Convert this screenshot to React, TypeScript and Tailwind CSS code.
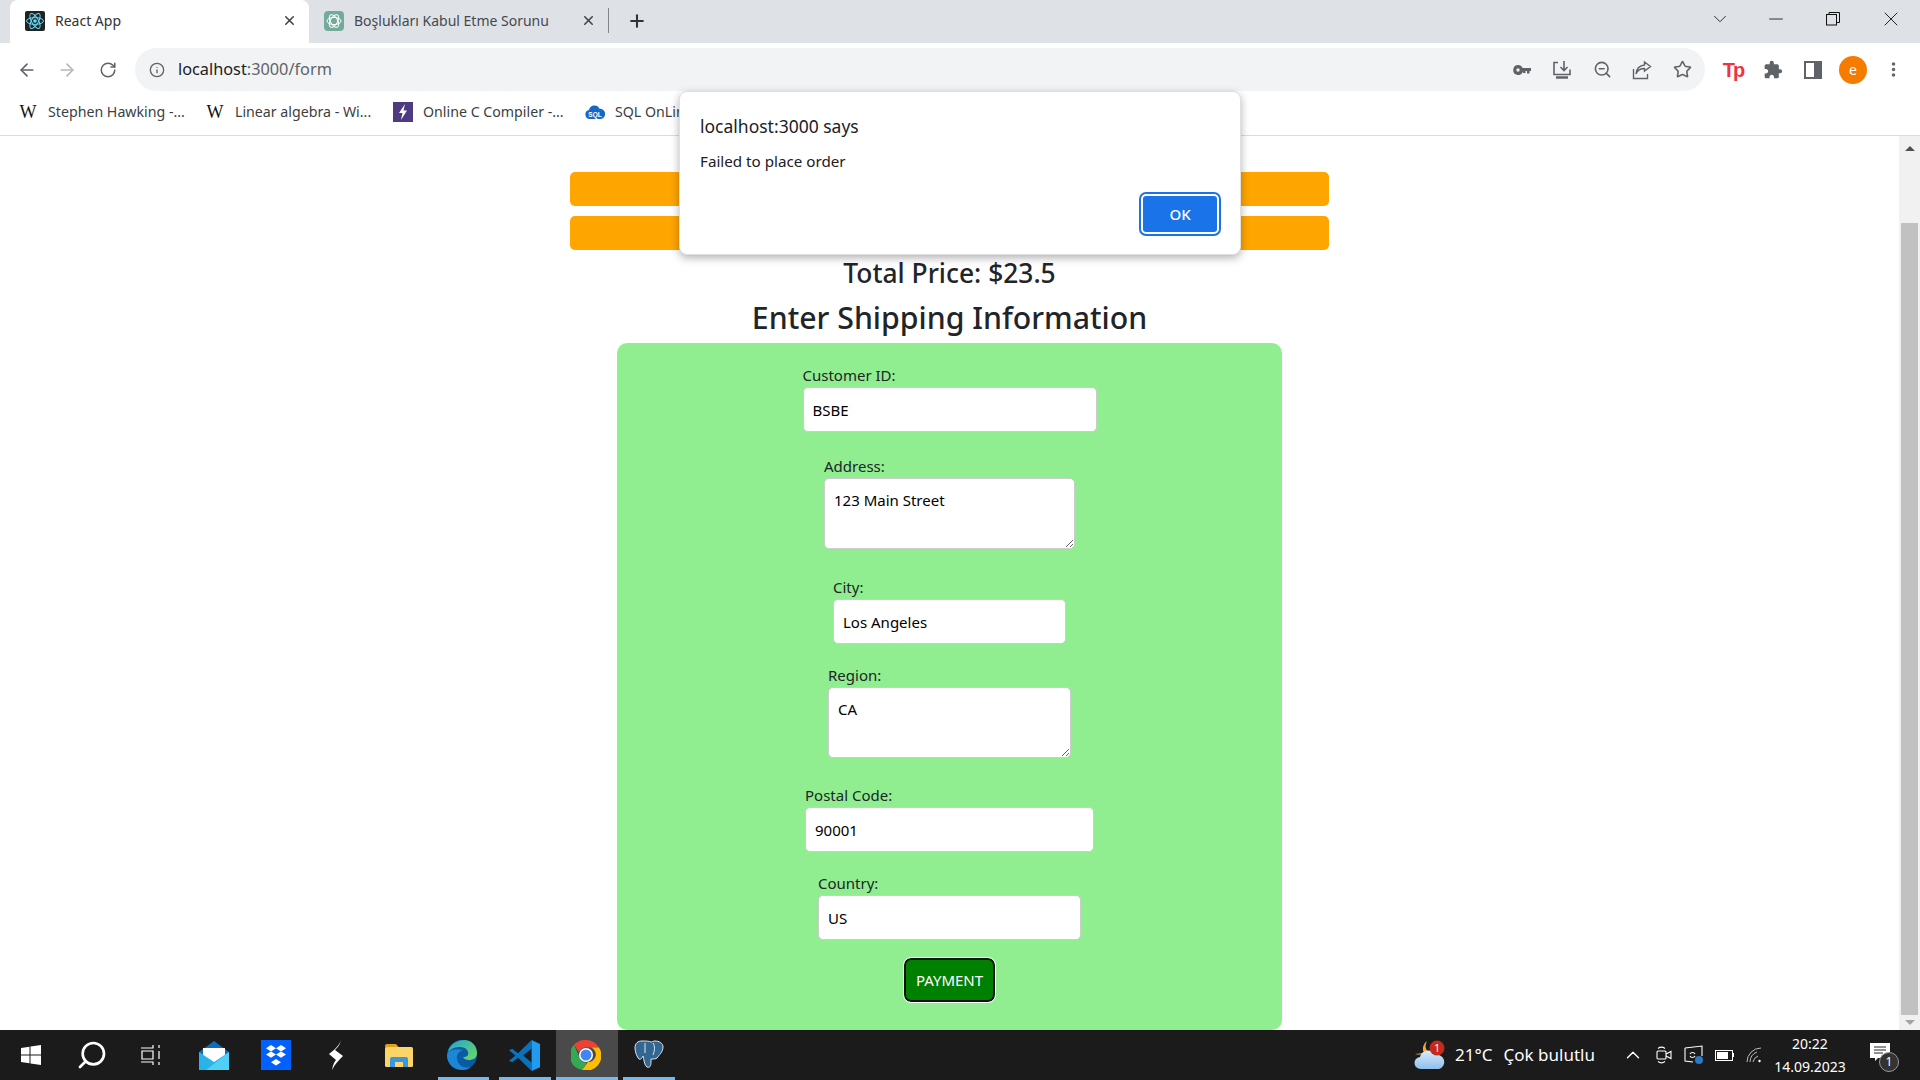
import { ArrowLeft, ArrowRight, ChevronDown, ChevronUp, Info, Minus, MoreVertical, Plus, RotateCw, Search, Star, X, ZoomOut } from "lucide-react";
import type { ReactNode } from "react";

const ReactFavicon = () => (
  <svg width="20" height="20" viewBox="0 0 20 20">
    <rect width="20" height="20" rx="2" fill="#222" />
    <g fill="none" stroke="#61dafb" strokeWidth="1">
      <ellipse cx="10" cy="10" rx="8.5" ry="3.4" />
      <ellipse cx="10" cy="10" rx="8.5" ry="3.4" transform="rotate(60 10 10)" />
      <ellipse cx="10" cy="10" rx="8.5" ry="3.4" transform="rotate(120 10 10)" />
    </g>
    <circle cx="10" cy="10" r="1.8" fill="#61dafb" />
  </svg>
);

const GptFavicon = () => (
  <svg width="20" height="20" viewBox="0 0 20 20">
    <rect width="20" height="20" rx="4" fill="#74aa9c" />
    <g fill="none" stroke="#fff" strokeWidth="1">
      <ellipse cx="10" cy="10" rx="7" ry="3.6" />
      <ellipse cx="10" cy="10" rx="7" ry="3.6" transform="rotate(60 10 10)" />
      <ellipse cx="10" cy="10" rx="7" ry="3.6" transform="rotate(120 10 10)" />
    </g>
  </svg>
);

const Wiki = () => <span className="w-[20px] shrink-0 text-center font-['Liberation_Serif',serif] text-[18px] leading-none text-[#111]">W</span>;

const BoltFavicon = () => (
  <svg width="20" height="20" viewBox="0 0 20 20" className="shrink-0">
    <rect width="20" height="20" fill="#4e3a80" />
    <path d="M12 2 6 11h3.5L8 18l6-9.500h-3.500z" fill="#fff" />
  </svg>
);

const SqlFavicon = () => (
  <svg width="20" height="20" viewBox="0 0 20 20" className="shrink-0">
    <path d="M5 17a4.500 4.500 0 0 1-1-8.900 5.500 5.500 0 0 1 10.500-1.300A5 5 0 0 1 15.500 17z" fill="#1667c7" />
    <text x="10" y="14.500" textAnchor="middle" fill="#fff" fontSize="6.500" fontWeight="700" fontFamily="Liberation Sans, sans-serif">SQL</text>
  </svg>
);

const Restore = () => (
  <svg width="14" height="14" viewBox="0 0 14 14" fill="none" stroke="#111" strokeWidth="1">
    <rect x="0.500" y="2.500" width="10" height="10.500" />
    <path d="M3 2.500V.5h10.500v10H11" />
  </svg>
);

const KeyIcon = () => (
  <svg width="18" height="10" viewBox="0 0 18 10" fill="#5f6368">
    <path d="M5 0a5 5 0 0 1 4.600 3H18v3h-1.500v2.500H14V6h-1.500v2H10V6.500A5 5 0 1 1 5 0zm0 3.300a1.700 1.700 0 1 0 0 3.400 1.700 1.700 0 0 0 0-3.400z" fillRule="evenodd" />
  </svg>
);

const DownloadIcon = () => (
  <svg width="20" height="20" viewBox="0 0 20 20" fill="none" stroke="#5f6368" strokeWidth="1.600">
    <path d="M6 2.500H2v12h16v-5M12 1v9M8.500 7l3.500 3.500L15.500 7" />
    <path d="M4 17.500h12" strokeWidth="2.500" />
  </svg>
);

const ShareIcon = () => (
  <svg width="20" height="20" viewBox="0 0 20 20" fill="none" stroke="#5f6368" strokeWidth="1.400">
    <path d="M1.500 9v9.500h14V14M12.500 2l6 4.500-6 4.500V8.500C8 8.500 5.500 10.500 4 14c.5-5 3.500-8.500 8.500-9z" />
  </svg>
);

const PuzzleIcon = () => (
  <svg width="20" height="20" viewBox="0 0 24 24" fill="#5f6368">
    <path d="M20.500 11H19V7c0-1.100-.9-2-2-2h-4V3.500a2.500 2.500 0 0 0-5 0V5H4c-1.100 0-1.990.9-1.990 2v3.800H3.500c1.490 0 2.700 1.210 2.700 2.700s-1.210 2.700-2.700 2.700H2V20c0 1.100.9 2 2 2h3.800v-1.500c0-1.490 1.210-2.700 2.700-2.700s2.700 1.210 2.700 2.700V22H17c1.100 0 2-.9 2-2v-4h1.500a2.500 2.500 0 0 0 0-5z" />
  </svg>
);

const TpLogo = () => (
  <span className="font-['Liberation_Sans',sans-serif] text-[20px] font-bold leading-none tracking-[-2px] text-[#f2323f]">Tp</span>
);

const PanelIcon = () => (
  <span className="block h-[18px] w-[18px] border-[2px] border-r-[8px] border-[#5f6368] bg-white" />
);

const WinLogo = () => (
  <svg width="20" height="20" viewBox="0 0 20 20" fill="#fff">
    <path d="M0 3l8.500-1.200V9.500H0zM9.500 1.600 20 0v9.500H9.500zM0 10.500h8.500v7.700L0 17zM9.500 10.500H20V20L9.500 18.400z" />
  </svg>
);

const TaskView = () => (
  <svg width="20" height="20" viewBox="0 0 20 20" fill="none" stroke="#fff" strokeWidth="1.200">
    <path d="M0 3h12V0M0 17h12v3M1 6h11v8H1zM18 0v3M18 6v8M18 17v3" />
  </svg>
);

const MailIcon = () => (
  <svg width="30" height="29" viewBox="0 0 30 29">
    <path d="M15 0 30 11v18H0V11z" fill="#0f6cbd" />
    <path d="M4 7h22v9l-11 7-11-7z" fill="#fff" />
    <path d="M0 11l15 10 15-10v18H0z" fill="#28b4ea" />
    <path d="M30 11v18H7z" fill="#50d0f5" />
  </svg>
);

const DropboxIcon = () => (
  <svg width="30" height="30" viewBox="0 0 30 30">
    <rect width="30" height="30" fill="#0061ff" />
    <path d="M10 5l5 3.200-5 3.200-5-3.200zM20 5l5 3.200-5 3.200-5-3.200zM10 11.400l5 3.200-5 3.200-5-3.200zM20 11.400l5 3.200-5 3.200-5-3.200zM15 19l5 3.200-5 3.200-5-3.200z" fill="#fff" />
  </svg>
);

const BoltMark = () => (
  <svg width="16" height="30" viewBox="0 0 16 30">
    <path d="M13 0C12 5 9 8 7 10l8 6c-4 4-8 8-11 14 1-5 2-8 4-10l-7-6C6 10 11 6 13 0z" fill="#fff" />
  </svg>
);

const FolderIcon = () => (
  <svg width="28" height="23" viewBox="0 0 28 23">
    <path d="M0 2a2 2 0 0 1 2-2h9l3 3.500H0z" fill="#e0a11a" />
    <rect y="3" width="28" height="20" rx="1.500" fill="#fbd568" />
    <path d="M5 23v-8a2 2 0 0 1 2-2h14a2 2 0 0 1 2 2v8h-5v-5h-8v5z" fill="#3a96dd" />
  </svg>
);

const EdgeIcon = () => (
  <svg width="30" height="30" viewBox="0 0 30 30">
    <defs>
      <linearGradient id="edgeTop" x1="0" y1="0" x2="1" y2="1">
        <stop offset="0" stopColor="#1fa5d8" />
        <stop offset="1" stopColor="#6fdb5c" />
      </linearGradient>
    </defs>
    <circle cx="15" cy="15" r="15" fill="#0c59a4" />
    <path d="M1 12C3 3 12 0 17 0c8 0 13 6 13 13 0 5-4 7-8 7-3 0-5-1-6-3 4 0 6-2 5-5-1-4-5-5-9-5-5 0-9 3-11 5z" fill="url(#edgeTop)" />
    <path d="M0 15c0 9 7 15 15 15 4 0 7-1 9-3-8 2-13-2-14-8-1-5 3-8 6-9-7-2-15 0-16 5z" fill="#1b87d6" />
  </svg>
);

const VsCodeIcon = () => (
  <svg width="31" height="31" viewBox="0 0 24 24">
    <path d="M17.500 0 7 10.200 2.500 6.700 0 8l5 4-5 4 2.500 1.300L7 13.800 17.500 24V17.500L11 12l6.500-5.500z" fill="#0a72bd" />
    <path d="M17.500 0 24 3v18l-6.500 3z" fill="#1f9cf0" />
  </svg>
);

const ChromeIcon = () => (
  <svg width="30" height="30" viewBox="0 0 30 30">
    <path d="M15 0a15 15 0 0 1 13 7.500H15a7.500 7.500 0 0 0-7 4.800L3 4.800A15 15 0 0 1 15 0z" fill="#ea4335" />
    <path d="M3 4.800l5.500 13a7.500 7.500 0 0 0 7.500 4.700L11 30A15 15 0 0 1 3 4.800z" fill="#34a853" />
    <path d="M28 7.500A15 15 0 0 1 11 30l6-8a7.500 7.500 0 0 0 3-14.500z" fill="#fbbc05" />
    <circle cx="15" cy="15" r="7" fill="#fff" />
    <circle cx="15" cy="15" r="5.500" fill="#4285f4" />
  </svg>
);

const PgIcon = () => (
  <svg width="30" height="30" viewBox="0 0 30 30" fill="#336791" stroke="#dbe6f0" strokeWidth="1">
    <path d="M8 1c-4 0-7 2-7 7 0 4 2 9 4 11 2 1 3-1 4-3 1 3 1 9 4 11 3 1 4-1 4-5v-3c3 0 5 0 6-1 2-3 6-6 6-11 0-4-4-6-8-6-2 0-3 1-4 1-2-1-5-1-9-1z" />
    <path d="M11 3v10M19 3c2 3 2 7 0 12" fill="none" />
  </svg>
);

const WeatherIcon = () => (
  <svg width="32" height="30" viewBox="0 0 32 30">
    <defs>
      <linearGradient id="cloudFill" x1="0" y1="0" x2="0" y2="1">
        <stop offset="0" stopColor="#d8ebfb" />
        <stop offset="1" stopColor="#8fbfee" />
      </linearGradient>
    </defs>
    <path d="M13 1a9 9 0 0 0-3 12l-9 1c4 1 10 1 13-3-3-2-3-6-1-10z" fill="#f2a83a" />
    <path d="M7 29a6 6 0 0 1-1-12 8 8 0 0 1 15-2 7 7 0 0 1 4 14z" fill="url(#cloudFill)" />
    <circle cx="23" cy="8" r="7.500" fill="#c42b1c" />
    <text x="23" y="11.500" textAnchor="middle" fill="#fff" fontSize="10" fontFamily="Noto Sans, sans-serif">1</text>
  </svg>
);

const CameraTray = () => (
  <svg width="16" height="20" viewBox="0 0 16 20" fill="none" stroke="#fff" strokeWidth="1.100">
    <rect x="1" y="6" width="9" height="8" rx="1" />
    <path d="M10 9l5-2.500v7L10 11M2 3.500c2-1.500 5-1.500 7 0M2 16.500c2 1.500 5 1.500 7 0" />
  </svg>
);

const MonitorTray = () => (
  <svg width="20" height="20" viewBox="0 0 20 20" fill="none" stroke="#fff" strokeWidth="1.100">
    <path d="M1 3l17-2v10M1 3v13l8 1" />
    <path d="M6 9c1-2 4-2 5 0M11 11c-1 2-4 2-5 0" />
    <circle cx="15" cy="15" r="4" fill="#2f78c4" stroke="none" />
  </svg>
);

const BatteryTray = () => (
  <span className="flex items-center">
    <span className="block h-[11px] w-[18px] border border-white p-[1px]">
      <span className="block h-full w-[11px] bg-white" />
    </span>
    <span className="block h-[4px] w-[1px] bg-white" />
  </span>
);

const WifiTray = () => (
  <svg width="16" height="16" viewBox="0 0 16 16" fill="none" stroke="#bbb" strokeWidth="1">
    <path d="M1 15A14 14 0 0 1 15 1M4 15A11 11 0 0 1 11 5M7 15a8 8 0 0 1 5-6" />
    <circle cx="13.500" cy="14" r="1.200" fill="#fff" stroke="none" />
  </svg>
);

const NotifyTray = () => (
  <span className="relative block h-[26px] w-[20px]">
    <svg width="20" height="18" viewBox="0 0 20 18" className="mt-[1px]">
      <path d="M0 0h20v15H8l-3 3v-3H0z" fill="#fff" />
      <path d="M4 4h12M4 7h12M4 10h9" stroke="#222" strokeWidth="1" />
    </svg>
    <span className="absolute left-[9px] top-[9px] flex h-[20px] w-[20px] items-center justify-center rounded-full border border-[#999] bg-[#333] text-[12px] text-white">1</span>
  </span>
);

function Tab({ icon, title, active }: { icon: ReactNode; title: string; active?: boolean }) {
  return (
    <div className={`flex h-full w-[299px] items-center pb-[2px] pl-[15px] ${active ? "rounded-t-[8px] bg-white text-[#333]" : "text-[#45494f]"}`}>
      {icon}
      <span className="ml-[10px] flex-1 whitespace-nowrap text-[14px]">{title}</span>
      <X size={15} strokeWidth={2.500} className="mr-[12px] text-[#444]" />
    </div>
  );
}

function Bookmark({ icon, label, className }: { icon: ReactNode; label: string; className: string }) {
  return (
    <div className={`flex items-center gap-[10px] whitespace-nowrap text-[14.200px] text-[#3c4043] ${className}`}>
      {icon}
      <span>{label}</span>
    </div>
  );
}

function ToolIcon({ children }: { children: ReactNode }) {
  return <span className="flex w-[40px] items-center justify-center text-[#5f6368]">{children}</span>;
}

function TaskSlot({ children, open, active, className = "" }: { children: ReactNode; open?: boolean; active?: boolean; className?: string }) {
  return (
    <div className={`relative flex h-full w-[61.800px] items-center justify-center ${active ? "bg-[#4a4a4a]" : ""} ${className}`}>
      {children}
      {open && <span className={`absolute bottom-0 h-[3px] bg-[#76b9ed] ${active ? "inset-x-0" : "inset-x-[5px]"}`} />}
    </div>
  );
}

function Field({ label, value, rows, wrapClass, fieldClass }: { label: string; value: string; rows?: boolean; wrapClass: string; fieldClass: string }) {
  const shared = `block rounded-[5px] border border-[#ccc] bg-white px-[9px] text-[15px] text-black outline-none ${fieldClass}`;
  return (
    <div className={wrapClass}>
      <label className="block h-[24px] text-[15px] leading-[24px] text-[#212529]">{label}</label>
      {rows ? (
        <textarea readOnly value={value} className={`${shared} resize py-[9px] leading-[24px]`} />
      ) : (
        <input readOnly value={value} className={shared} />
      )}
    </div>
  );
}

export default function App() {
  return (
    <div className="relative flex h-screen w-[1920px] flex-col overflow-hidden bg-white font-['Noto_Sans',sans-serif]">
      {/* tab strip */}
      <div className="flex h-[43px] items-center bg-[#dee1e6] pl-[10px]">
        <Tab active icon={<ReactFavicon />} title="React App" />
        <Tab icon={<GptFavicon />} title="Boşlukları Kabul Etme Sorunu" />
        <span className="mb-[2px] h-[25px] w-px bg-[#80868b]" />
        <Plus size={20} strokeWidth={2.500} className="mb-[2px] ml-[18px] text-[#333]" />
        <div className="mb-[6px] ml-auto flex items-center text-[#222]">
          <ChevronDown size={22} strokeWidth={1} className="mr-[34px]" />
          <Minus size={22} strokeWidth={1} className="mr-[39px]" />
          <span className="mr-[39px]"><Restore /></span>
          <X size={24} strokeWidth={1} className="mr-[17px]" />
        </div>
      </div>

      {/* toolbar */}
      <div className="flex h-[49px] items-center bg-white pl-[7px] pt-[4px]">
        <ArrowLeft size={20} className="mx-[10px] text-[#5f6368]" />
        <ArrowRight size={20} className="mx-[10px] text-[#b5b8bb]" />
        <RotateCw size={18} className="mx-[12px] text-[#5f6368]" />
        <div className="ml-[6px] flex h-[43px] w-[1570px] items-center rounded-full bg-[#f1f3f4] pl-[14px] pr-[3px]">
          <Info size={16} className="text-[#5f6368]" />
          <span className="ml-[13px] text-[16.300px]">
            <span className="text-[#202124]">localhost</span>
            <span className="text-[#5f6368]">:3000/form</span>
          </span>
          <div className="ml-auto flex items-center">
            <ToolIcon><KeyIcon /></ToolIcon>
            <ToolIcon><DownloadIcon /></ToolIcon>
            <ToolIcon><ZoomOut size={19} /></ToolIcon>
            <ToolIcon><ShareIcon /></ToolIcon>
            <ToolIcon><Star size={19} strokeWidth={2} /></ToolIcon>
          </div>
        </div>
        <div className="ml-[8px] flex items-center">
          <ToolIcon><TpLogo /></ToolIcon>
          <ToolIcon><PuzzleIcon /></ToolIcon>
          <ToolIcon><PanelIcon /></ToolIcon>
          <span className="flex w-[40px] justify-center">
            <span className="flex h-[28px] w-[28px] items-center justify-center rounded-full bg-[#f57c00] text-[14px] text-white">e</span>
          </span>
          <ToolIcon><MoreVertical size={19} strokeWidth={2.500} /></ToolIcon>
        </div>
      </div>

      {/* bookmarks */}
      <div className="flex h-[44px] items-center border-b border-[#dadce0] bg-white pb-[3px] pl-[18px]">
        <Bookmark icon={<Wiki />} label="Stephen Hawking -..." className="w-[187px]" />
        <Bookmark icon={<Wiki />} label="Linear algebra - Wi..." className="w-[188px]" />
        <Bookmark icon={<BoltFavicon />} label="Online C Compiler -..." className="w-[192px]" />
        <Bookmark icon={<SqlFavicon />} label="SQL OnLine" className="w-[110px]" />
      </div>

      {/* page */}
      <div className="flex min-h-0 flex-1">
        <main className="min-w-0 flex-1 overflow-hidden">
          <div className="mx-auto mt-[36px] flex w-[759px] flex-col gap-[10px]">
            <div className="h-[34px] rounded-[5px] bg-[#ffa500]" />
            <div className="h-[34px] rounded-[5px] bg-[#ffa500]" />
          </div>
          <h3 className="mt-[2px] text-center text-[26.400px] font-medium leading-[42px] text-[#212529]">Total Price: $23.5</h3>
          <h2 className="text-center text-[30.250px] font-medium leading-[48px] text-[#212529]">Enter Shipping Information</h2>
          <form className="mx-auto mt-px flex h-[687px] w-[665px] flex-col items-center rounded-[10px] bg-[#90ee90] pt-[20px]">
            <Field label="Customer ID:" value="BSBE" wrapClass="" fieldClass="h-[45px] w-[294px]" />
            <Field label="Address:" value="123 Main Street" rows wrapClass="mt-[22px]" fieldClass="h-[71px] w-[251px]" />
            <Field label="City:" value="Los Angeles" wrapClass="mt-[26px]" fieldClass="h-[45px] w-[233px]" />
            <Field label="Region:" value="CA" rows wrapClass="mt-[19px]" fieldClass="h-[71px] w-[243px]" />
            <Field label="Postal Code:" value="90001" wrapClass="mt-[25px]" fieldClass="h-[45px] w-[289px]" />
            <Field label="Country:" value="US" wrapClass="mt-[19px]" fieldClass="h-[45px] w-[263px]" />
            <button type="button" className="mt-[18px] h-[44px] w-[91px] rounded-[7px] border-[2px] border-[#111] bg-[#008000] text-[15px] text-white outline outline-1 outline-white">
              PAYMENT
            </button>
          </form>
        </main>
        {/* scrollbar */}
        <div className="flex w-[21px] flex-col items-center bg-[#f1f1f1]">
          <div className="mt-[10px] h-0 w-0 border-x-[5px] border-b-[5px] border-x-transparent border-b-[#505050]" />
          <div className="mt-[72px] h-[792px] w-[17px] bg-[#c1c1c1]" />
          <div className="mt-[5px] h-0 w-0 border-x-[5px] border-t-[5px] border-x-transparent border-t-[#a3a3a3]" />
        </div>
      </div>

      {/* taskbar */}
      <div className="flex h-[50px] items-center bg-[#1b1b1b] text-white">
        <TaskSlot><WinLogo /></TaskSlot>
        <TaskSlot className="pr-[2px]"><Search size={32} strokeWidth={2} className="-scale-x-100" /></TaskSlot>
        <TaskSlot className="pr-[6px]"><TaskView /></TaskSlot>
        <TaskSlot className="pr-[5px]"><MailIcon /></TaskSlot>
        <TaskSlot className="pr-[5px]"><DropboxIcon /></TaskSlot>
        <TaskSlot className="pr-[7px]"><BoltMark /></TaskSlot>
        <TaskSlot className="pr-[5px]"><FolderIcon /></TaskSlot>
        <TaskSlot open className="pr-[2px]"><EdgeIcon /></TaskSlot>
        <TaskSlot open className="pr-[2px]"><VsCodeIcon /></TaskSlot>
        <TaskSlot open active className="pr-[2px]"><ChromeIcon /></TaskSlot>
        <TaskSlot open><PgIcon /></TaskSlot>
        <div className="ml-auto flex h-full items-center">
          <WeatherIcon />
          <span className="ml-[9px] whitespace-nowrap text-[17px]">21°C</span>
          <span className="ml-[11px] whitespace-nowrap text-[17px]">Çok bulutlu</span>
          <ChevronUp size={22} strokeWidth={1.500} className="ml-[27px]" />
          <span className="ml-[12px]"><CameraTray /></span>
          <span className="ml-[12px]"><MonitorTray /></span>
          <span className="ml-[11px]"><BatteryTray /></span>
          <span className="ml-[12px]"><WifiTray /></span>
          <div className="ml-[6px] flex w-[84px] flex-col items-center text-[14px] leading-[23px]">
            <span>20:22</span>
            <span>14.09.2023</span>
          </div>
          <span className="ml-[18px] mr-[30px]"><NotifyTray /></span>
        </div>
      </div>

      {/* alert dialog */}
      <div className="absolute left-[679px] top-[91px] h-[164px] w-[562px] rounded-[8px] border border-[#e0e0e0] bg-white pl-[20px] pt-[21px] shadow-[0_3px_8px_rgba(0,0,0,0.3)]">
        <div className="text-[17.500px] leading-[26px] text-[#202124]">localhost:3000 says</div>
        <div className="mt-[10px] text-[15.200px] leading-[24px] text-[#202124]">Failed to place order</div>
        <div className="mt-[21px] flex justify-end pr-[21px]">
          <button type="button" className="h-[40px] w-[78px] rounded-[5px] border-[2px] border-white bg-[#1a73e8] text-[15px] font-medium text-white outline outline-2 outline-[#1a73e8]">
            OK
          </button>
        </div>
      </div>
    </div>
  );
}
